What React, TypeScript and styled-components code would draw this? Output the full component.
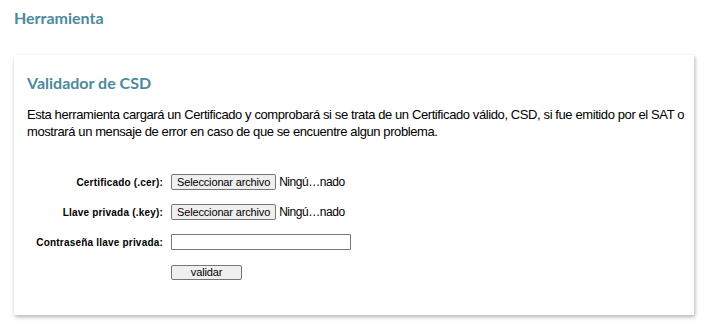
import React from 'react';
import styled, { createGlobalStyle } from 'styled-components';

const GlobalStyle = createGlobalStyle`
  html, body {
    margin: 0;
    padding: 0;
    background: #fff;
  }
  body {
    font-family: 'Liberation Sans', Arial, sans-serif;
    color: #000;
  }
`;

const Page = styled.div`
  padding: 8px 17px 12px 14px;
`;

const PageTitle = styled.h2`
  font-family: Lato, 'Open Sans', sans-serif;
  font-weight: 700;
  font-size: 16px;
  line-height: 20px;
  color: #4b8a9c;
  margin: 0 0 27px 0;
`;

const Card = styled.section`
  background: #fff;
  box-shadow: 1px 2px 4px rgba(0, 0, 0, 0.3);
  padding: 18px 10px 34px 13px;
`;

const CardTitle = styled.h3`
  font-family: Lato, 'Open Sans', sans-serif;
  font-weight: 700;
  font-size: 16px;
  line-height: 20px;
  color: #4b8a9c;
  margin: 0 0 13px 0;
`;

const Intro = styled.p`
  font-size: 13px;
  line-height: 17px;
  letter-spacing: -0.4px;
  margin: 0 0 33px 0;
`;

const Form = styled.form`
  display: grid;
  grid-template-columns: 136px auto;
  column-gap: 8px;
  row-gap: 12px;
  align-items: center;
`;

const Label = styled.label`
  font-size: 10px;
  font-weight: 700;
  letter-spacing: 0.2px;
  text-align: right;
`;

const Field = styled.div`
  display: flex;
  align-items: center;
  gap: 3px;
  height: 18px;
`;

const Button = styled.button<{ $width?: number }>`
  font-family: 'Liberation Sans', Arial, sans-serif;
  font-size: 11px;
  line-height: 13px;
  letter-spacing: -0.15px;
  height: ${(p) => (p.$width ? 15 : 16)}px;
  width: ${(p) => (p.$width ? `${p.$width}px` : 'auto')};
  padding: 0 5px;
  background: #efefef;
  color: #000;
  border: 1px solid #767676;
  border-radius: 2px;
  box-sizing: border-box;
`;

const FileName = styled.span`
  font-size: 12px;
  letter-spacing: -0.45px;
`;

const TextInput = styled.input`
  width: 180px;
  height: 16px;
  box-sizing: border-box;
  border: 1px solid #767676;
  border-radius: 1px;
  padding: 0 2px;
  font-size: 11px;
`;

const Spacer = styled.div``;

const App: React.FC = () => {
  return (
    <Page>
      <GlobalStyle />
      <PageTitle>Herramienta</PageTitle>
      <Card>
        <CardTitle>Validador de CSD</CardTitle>
        <Intro>
          Esta herramienta cargará un Certificado y comprobará si se trata de un Certificado válido, CSD, si fue
          emitido por el SAT o mostrará un mensaje de error en caso de que se encuentre algun problema.
        </Intro>
        <Form onSubmit={(e) => e.preventDefault()}>
          <Label>Certificado (.cer):</Label>
          <Field>
            <Button type="button">Seleccionar archivo</Button>
            <FileName>Ningú…nado</FileName>
          </Field>
          <Label>Llave privada (.key):</Label>
          <Field>
            <Button type="button">Seleccionar archivo</Button>
            <FileName>Ningú…nado</FileName>
          </Field>
          <Label>Contraseña llave privada:</Label>
          <Field>
            <TextInput type="password" />
          </Field>
          <Spacer />
          <Field>
            <Button type="submit" $width={71}>validar</Button>
          </Field>
        </Form>
      </Card>
    </Page>
  );
};

export default App;
